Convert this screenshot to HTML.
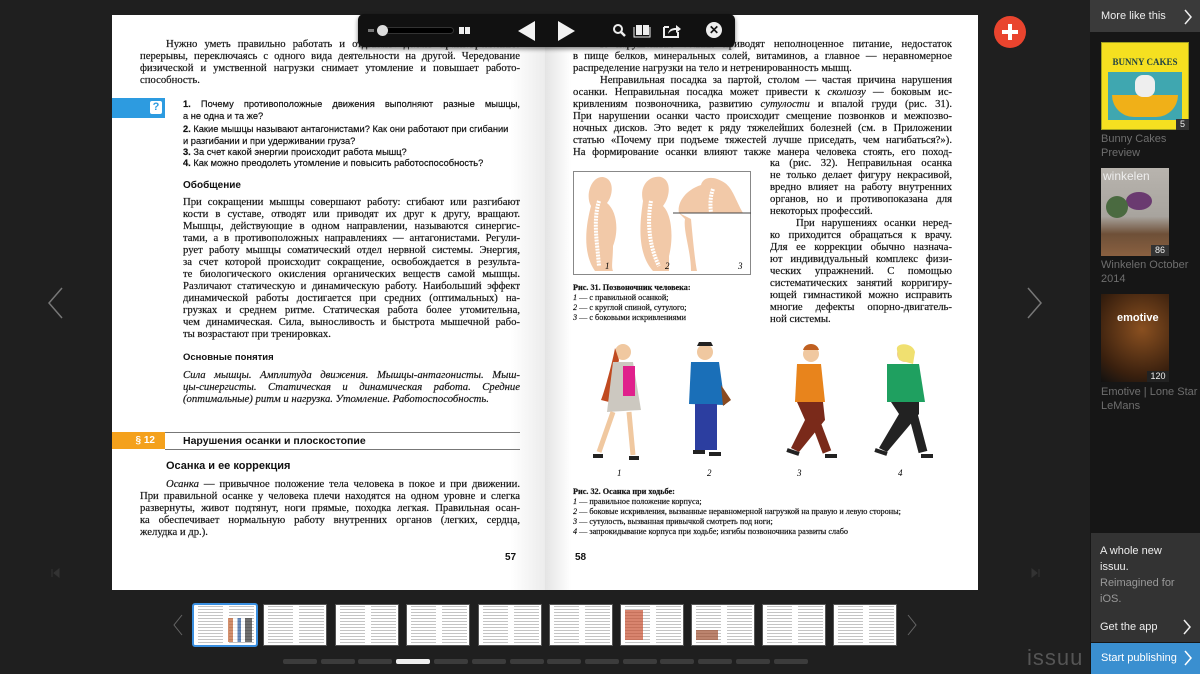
<!DOCTYPE html>
<html><head><meta charset="utf-8">
<style>
*{margin:0;padding:0;box-sizing:border-box}
body{width:1200px;height:674px;background:#1f1f1f;position:relative;overflow:hidden;font-family:"Liberation Sans",sans-serif}
.pg{position:absolute;top:15px;height:575px;background:#fff}
.l{position:absolute;font:10.7px/12px "Liberation Serif",serif;color:#151515;white-space:nowrap;text-align:justify;text-align-last:justify;height:12px;overflow:hidden;-webkit-text-stroke:0.2px #151515}
.s{font-family:"Liberation Sans",sans-serif;font-size:9.3px;color:#111;text-align-last:auto}
.h{position:absolute;font:bold 10px "Liberation Sans",sans-serif;color:#111}
.i{font-style:italic}
.sm{font-size:8.2px;text-align-last:auto}
.side{position:absolute;left:1090px;top:0;width:110px;height:674px;background:#161616}
.cap{position:absolute;left:1101px;font-size:11px;line-height:14px;color:#6e6e6e}
.th{position:absolute;top:604px;width:64px;height:42px;border:1px solid #555;background:
linear-gradient(90deg,#fff 0,#fff 4px,transparent 4px,transparent 29px,#fff 29px,#fff 35px,transparent 35px,transparent 60px,#fff 60px),
repeating-linear-gradient(#fff 0,#fff 1px,#c4c4c4 1px,#c4c4c4 2px,#fff 2px,#fff 3px);background-color:#fff}
.dot{position:absolute;top:659px;width:34px;height:5px;border-radius:2px;background:#3c3c3c}
</style></head><body>

<div class="pg" style="left:112px;width:433px;background:linear-gradient(90deg,#fff 0,#fff 92%,#ececec 100%)"></div>
<div class="pg" style="left:545px;width:433px;background:linear-gradient(90deg,#e4e4e4 0,#fff 6%,#fff 100%)"></div>

<!-- left page -->
<div class="l" style="left:166px;top:38px;width:354px">Нужно уметь правильно работать и отдыхать: делать кратковременные</div>
<div class="l" style="left:140px;top:50px;width:380px">перерывы, переключаясь с одного вида деятельности на другой. Чередование</div>
<div class="l" style="left:140px;top:62px;width:380px">физической и умственной нагрузки снимает утомление и повышает работо-</div>
<div class="l" style="left:140px;top:74px;text-align-last:auto">способность.</div>

<div style="position:absolute;left:112px;top:98px;width:53px;height:20px;background:#2d9be0"></div>
<div style="position:absolute;left:150px;top:101px;width:12px;height:13px;background:#fff;border-radius:2px;font:bold 11px/13px 'Liberation Sans';color:#2d9be0;text-align:center">?</div>
<div class="l s" style="left:183px;top:98px;width:337px;text-align-last:justify"><b>1.</b> Почему противоположные движения выполняют разные мышцы,</div>
<div class="l s" style="left:183px;top:110px">а не одна и та же?</div>
<div class="l s" style="left:183px;top:123px"><b>2.</b> Какие мышцы называют антагонистами? Как они работают при сгибании</div>
<div class="l s" style="left:183px;top:135px">и разгибании и при удерживании груза?</div>
<div class="l s" style="left:183px;top:146px"><b>3.</b> За счет какой энергии происходит работа мышц?</div>
<div class="l s" style="left:183px;top:157px"><b>4.</b> Как можно преодолеть утомление и повысить работоспособность?</div>

<div class="h" style="left:183px;top:180px">Обобщение</div>
<div class="l" style="left:183px;top:196px;width:337px">При сокращении мышцы совершают работу: сгибают или разгибают</div>
<div class="l" style="left:183px;top:208px;width:337px">кости в суставе, отводят или приводят их друг к другу, вращают.</div>
<div class="l" style="left:183px;top:220px;width:337px">Мышцы, действующие в одном направлении, называются синергис-</div>
<div class="l" style="left:183px;top:232px;width:337px">тами, а в противоположных направлениях — антагонистами. Регули-</div>
<div class="l" style="left:183px;top:244px;width:337px">рует работу мышцы соматический отдел нервной системы. Энергия,</div>
<div class="l" style="left:183px;top:256px;width:337px">за счет которой происходит сокращение, освобождается в результа-</div>
<div class="l" style="left:183px;top:268px;width:337px">те биологического окисления органических веществ самой мышцы.</div>
<div class="l" style="left:183px;top:280px;width:337px">Различают статическую и динамическую работу. Наибольший эффект</div>
<div class="l" style="left:183px;top:292px;width:337px">динамической работы достигается при средних (оптимальных) на-</div>
<div class="l" style="left:183px;top:304px;width:337px">грузках и среднем ритме. Статическая работа более утомительна,</div>
<div class="l" style="left:183px;top:316px;width:337px">чем динамическая. Сила, выносливость и быстрота мышечной рабо-</div>
<div class="l" style="left:183px;top:328px;text-align-last:auto">ты возрастают при тренировках.</div>

<div class="h" style="left:183px;top:352px;font-size:9.5px">Основные понятия</div>
<div class="l i" style="left:183px;top:369px;width:337px">Сила мышцы. Амплитуда движения. Мышцы-антагонисты. Мыш-</div>
<div class="l i" style="left:183px;top:381px;width:337px">цы-синергисты. Статическая и динамическая работа. Средние</div>
<div class="l i" style="left:183px;top:393px;text-align-last:auto">(оптимальные) ритм и нагрузка. Утомление. Работоспособность.</div>

<div style="position:absolute;left:165px;top:432px;width:355px;height:1px;background:#777"></div>
<div style="position:absolute;left:112px;top:432px;width:53px;height:17px;background:#f4a11c;color:#fff;font:bold 10px/17px 'Liberation Sans';text-align:right;padding-right:10px">§ 12</div>
<div class="h" style="left:183px;top:435px;font-size:10.5px">Нарушения осанки и плоскостопие</div>
<div style="position:absolute;left:165px;top:449px;width:355px;height:1px;background:#777"></div>
<div class="h" style="left:166px;top:460px;font-size:11px">Осанка и ее коррекция</div>
<div class="l" style="left:166px;top:478px;width:354px"><i>Осанка</i> — привычное положение тела человека в покое и при движении.</div>
<div class="l" style="left:140px;top:490px;width:380px">При правильной осанке у человека плечи находятся на одном уровне и слегка</div>
<div class="l" style="left:140px;top:502px;width:380px">развернуты, живот подтянут, ноги прямые, походка легкая. Правильная осан-</div>
<div class="l" style="left:140px;top:514px;width:380px">ка обеспечивает нормальную работу внутренних органов (легких, сердца,</div>
<div class="l" style="left:140px;top:526px;text-align-last:auto">желудка и др.).</div>
<div class="h" style="left:505px;top:552px">57</div>

<!-- right page -->
<div class="l" style="left:600px;top:38px;width:352px">К нарушениям осанки приводят неполноценное питание, недостаток</div>
<div class="l" style="left:573px;top:50px;width:379px">в пище белков, минеральных солей, витаминов, а главное — неравномерное</div>
<div class="l" style="left:573px;top:62px;text-align-last:auto">распределение нагрузки на тело и нетренированность мышц.</div>
<div class="l" style="left:600px;top:74px;width:352px">Неправильная посадка за партой, столом — частая причина нарушения</div>
<div class="l" style="left:573px;top:86px;width:379px">осанки. Неправильная посадка может привести к <i>сколиозу</i> — боковым ис-</div>
<div class="l" style="left:573px;top:98px;width:379px">кривлениям позвоночника, развитию <i>сутулости</i> и впалой груди (рис. 31).</div>
<div class="l" style="left:573px;top:110px;width:379px">При нарушении осанки часто происходит смещение позвонков и межпозво-</div>
<div class="l" style="left:573px;top:122px;width:379px">ночных дисков. Это ведет к ряду тяжелейших болезней (см. в Приложении</div>
<div class="l" style="left:573px;top:134px;width:379px">статью «Почему при подъеме тяжестей лучше приседать, чем нагибаться?»).</div>
<div class="l" style="left:573px;top:146px;width:379px">На формирование осанки влияют также манера человека стоять, его поход-</div>
<div class="l" style="left:770px;top:157px;width:182px">ка (рис. 32). Неправильная осанка</div>
<div class="l" style="left:770px;top:169px;width:182px">не только делает фигуру некрасивой,</div>
<div class="l" style="left:770px;top:181px;width:182px">вредно влияет на работу внутренних</div>
<div class="l" style="left:770px;top:193px;width:182px">органов, но и противопоказана для</div>
<div class="l" style="left:770px;top:205px;text-align-last:auto">некоторых профессий.</div>
<div class="l" style="left:796px;top:217px;width:156px">При нарушениях осанки неред-</div>
<div class="l" style="left:770px;top:229px;width:182px">ко приходится обращаться к врачу.</div>
<div class="l" style="left:770px;top:241px;width:182px">Для ее коррекции обычно назнача-</div>
<div class="l" style="left:770px;top:253px;width:182px">ют индивидуальный комплекс физи-</div>
<div class="l" style="left:770px;top:265px;width:182px">ческих упражнений. С помощью</div>
<div class="l" style="left:770px;top:277px;width:182px">систематических занятий корригиру-</div>
<div class="l" style="left:770px;top:289px;width:182px">ющей гимнастикой можно исправить</div>
<div class="l" style="left:770px;top:301px;width:182px">многие дефекты опорно-двигатель-</div>
<div class="l" style="left:770px;top:313px;text-align-last:auto">ной системы.</div>

<svg style="position:absolute;left:573px;top:171px" width="178" height="104">
<rect x="0.5" y="0.5" width="177" height="103" fill="#fff" stroke="#888"/>
<path d="M22 100 C8 80 14 50 18 35 C12 25 18 5 30 6 C42 8 40 25 34 32 C44 40 46 60 40 75 C40 88 38 96 40 100Z" fill="#f2c9a8"/>
<path d="M80 100 C62 80 68 45 70 30 C66 15 76 4 88 6 C100 10 96 28 90 35 C100 45 100 70 96 85 L96 100Z" fill="#f2c9a8"/>
<path d="M118 100 C118 80 110 60 112 48 L106 42 L170 42 C162 28 160 18 152 12 C140 4 130 6 128 14 C110 20 104 34 106 42 L118 48 C120 70 122 90 124 100Z" fill="#f2c9a8"/>
<path d="M26 30 C20 50 24 70 26 95 M78 30 C74 50 76 75 86 95 M140 18 C132 40 146 60 140 90" stroke="#fff" stroke-width="4" fill="none" stroke-dasharray="2 1"/>
<line x1="100" y1="42" x2="178" y2="42" stroke="#444"/>
<text x="32" y="98" font-size="9" font-style="italic" font-family="Liberation Serif">1</text>
<text x="92" y="98" font-size="9" font-style="italic" font-family="Liberation Serif">2</text>
<text x="165" y="98" font-size="9" font-style="italic" font-family="Liberation Serif">3</text>
</svg>
<div class="l sm" style="left:573px;top:282px;font-weight:bold">Рис. 31. Позвоночник человека:</div>
<div class="l sm" style="left:573px;top:292px"><i>1</i> — с правильной осанкой;</div>
<div class="l sm" style="left:573px;top:302px"><i>2</i> — с круглой спиной, сутулого;</div>
<div class="l sm" style="left:573px;top:312px"><i>3</i> — с боковыми искривлениями</div>

<svg style="position:absolute;left:585px;top:340px" width="350" height="140">
<g><circle cx="38" cy="12" r="8" fill="#f0c8a0"/><path d="M30 8 C28 20 20 50 16 60 L24 62 L34 20Z" fill="#c04a20"/><path d="M28 22 L48 22 L56 70 L22 72Z" fill="#ccc8c0"/><rect x="38" y="26" width="12" height="30" fill="#e0208c"/><path d="M28 72 L14 112 M44 72 L48 115" stroke="#f0c8a0" stroke-width="5"/><path d="M8 116 L18 116 M44 118 L54 118" stroke="#222" stroke-width="4"/></g>
<g transform="translate(100,0)"><circle cx="20" cy="12" r="8" fill="#f0c8a0"/><path d="M12 6 L28 6 L26 2 L14 2Z" fill="#222"/><path d="M6 22 L34 22 L40 65 L4 64Z" fill="#1a6fb8"/><rect x="10" y="64" width="22" height="46" fill="#2c3ea0"/><path d="M36 45 L46 60 L38 66Z" fill="#8a4a20"/><path d="M8 112 L20 112 M24 114 L36 114" stroke="#222" stroke-width="4"/></g>
<g transform="translate(200,0)"><circle cx="26" cy="14" r="8" fill="#f0c8a0"/><path d="M18 10 C20 2 32 2 34 10Z" fill="#c06020"/><path d="M12 24 L36 24 L40 62 L10 62Z" fill="#e8841c"/><path d="M12 62 L38 62 L40 80 L14 112 L6 108 L20 80Z" fill="#7a2a1a"/><path d="M30 80 L42 112" stroke="#7a2a1a" stroke-width="9"/><path d="M2 110 L14 114 M40 116 L52 116" stroke="#222" stroke-width="4"/></g>
<g transform="translate(290,0)"><circle cx="30" cy="14" r="8" fill="#f0c8a0"/><path d="M22 10 C20 2 38 2 40 12 L38 24 L24 20Z" fill="#f0e070"/><path d="M12 24 L44 24 L50 62 L12 62Z" fill="#1fa060"/><path d="M16 62 L44 62 L44 74 L12 112 L4 108 L24 74Z" fill="#222"/><path d="M38 74 L48 112" stroke="#222" stroke-width="9"/><path d="M0 110 L12 114 M46 116 L58 116" stroke="#222" stroke-width="4"/></g>
<g font-size="9" font-style="italic" font-family="Liberation Serif"><text x="32" y="136">1</text><text x="122" y="136">2</text><text x="212" y="136">3</text><text x="313" y="136">4</text></g>
</svg>
<div class="l sm" style="left:573px;top:486px;font-weight:bold">Рис. 32. Осанка при ходьбе:</div>
<div class="l sm" style="left:573px;top:496px"><i>1</i> — правильное положение корпуса;</div>
<div class="l sm" style="left:573px;top:506px"><i>2</i> — боковые искривления, вызванные неравномерной нагрузкой на правую и левую стороны;</div>
<div class="l sm" style="left:573px;top:516px"><i>3</i> — сутулость, вызванная привычкой смотреть под ноги;</div>
<div class="l sm" style="left:573px;top:526px"><i>4</i> — запрокидывание корпуса при ходьбе; изгибы позвоночника развиты слабо</div>
<div class="h" style="left:575px;top:552px">58</div>

<!-- toolbar -->
<div style="position:absolute;left:358px;top:14px;width:377px;height:33px;background:#111;border-radius:6px;box-shadow:0 2px 4px rgba(0,0,0,.5)"></div>
<div style="position:absolute;left:368px;top:29px;width:6px;height:3px;background:#777"></div>
<div style="position:absolute;left:378px;top:27px;width:76px;height:7px;background:#000;border-radius:4px;border:1px solid #333"></div>
<div style="position:absolute;left:377px;top:25px;width:11px;height:11px;background:#ddd;border-radius:50%"></div>
<div style="position:absolute;left:459px;top:27px;width:5px;height:7px;background:#eee"></div>
<div style="position:absolute;left:465px;top:27px;width:5px;height:7px;background:#eee"></div>
<svg style="position:absolute;left:518px;top:21px" width="60" height="20"><path d="M0 10 L17 0 L17 20Z M40 0 L57 10 L40 20Z" fill="#f2f2f2"/></svg>
<svg style="position:absolute;left:612px;top:23px" width="80" height="16">
<circle cx="6" cy="6" r="4" stroke="#eee" stroke-width="2" fill="none"/><path d="M9 9 L13 13" stroke="#eee" stroke-width="2.5"/>
<path d="M24 2 h6 v10 h-6z M31 2 h6 v10 h-6z" fill="#eee"/><path d="M22 4 v10 h16 v-10" stroke="#eee" fill="none"/>
<path d="M52 4 h5 M52 4 v10 h14 v-5" stroke="#eee" stroke-width="2" fill="none"/><path d="M56 11 C57 6 60 5 64 5 L64 2 L69 6 L64 10 L64 7 C61 7 58 8 56 11Z" fill="#eee"/>
</svg>
<div style="position:absolute;left:706px;top:22px;width:16px;height:16px;border-radius:50%;background:#eee;color:#111;font:bold 12px/16px 'Liberation Sans';text-align:center">✕</div>

<svg style="position:absolute;left:46px;top:287px" width="20" height="32"><path d="M16 1 L3 16 L16 31" stroke="#777" stroke-width="1.5" fill="none"/></svg>
<svg style="position:absolute;left:1025px;top:287px" width="20" height="32"><path d="M3 1 L16 16 L3 31" stroke="#777" stroke-width="1.5" fill="none"/></svg>
<svg style="position:absolute;left:51px;top:568px" width="10" height="10"><path d="M1 1v8M3 5L8 1v8Z" stroke="#333" fill="#333"/></svg>
<svg style="position:absolute;left:1030px;top:568px" width="10" height="10"><path d="M9 1v8M7 5L2 1v8Z" stroke="#333" fill="#333"/></svg>
<div style="position:absolute;left:994px;top:16px;width:32px;height:32px;border-radius:50%;background:#e9442e"></div>
<div style="position:absolute;left:1002px;top:30px;width:16px;height:4px;background:#fff"></div>
<div style="position:absolute;left:1008px;top:24px;width:4px;height:16px;background:#fff"></div>

<!-- thumbnails -->
<svg style="position:absolute;left:172px;top:614px" width="12" height="22"><path d="M10 1 L2 11 L10 21" stroke="#666" fill="none"/></svg>
<svg style="position:absolute;left:906px;top:614px" width="12" height="22"><path d="M2 1 L10 11 L2 21" stroke="#666" fill="none"/></svg>
<div class="th" style="left:192px;top:603px;width:66px;height:44px;border:2px solid #3a8fe0;border-radius:3px"></div>
<div class="th" style="left:263px"></div><div class="th" style="left:335px"></div><div class="th" style="left:406px"></div><div class="th" style="left:478px"></div><div class="th" style="left:549px"></div><div class="th" style="left:620px"></div><div class="th" style="left:691px"></div><div class="th" style="left:762px"></div><div class="th" style="left:833px"></div>
<div style="position:absolute;left:228px;top:618px;width:24px;height:24px;background:linear-gradient(90deg,#c06030 20%,#fff 20%,#fff 40%,#2a5aa0 40%,#2a5aa0 55%,#fff 55%,#fff 70%,#333 70%);opacity:.7"></div>
<div style="position:absolute;left:625px;top:610px;width:18px;height:30px;background:#c85030;opacity:.7"></div>
<div style="position:absolute;left:696px;top:630px;width:22px;height:10px;background:#a05030;opacity:.7"></div>

<div class="dot" style="left:283px"></div><div class="dot" style="left:321px"></div><div class="dot" style="left:358px"></div><div class="dot" style="left:396px;background:#eee"></div><div class="dot" style="left:434px"></div><div class="dot" style="left:472px"></div><div class="dot" style="left:510px"></div><div class="dot" style="left:547px"></div><div class="dot" style="left:585px"></div><div class="dot" style="left:623px"></div><div class="dot" style="left:660px"></div><div class="dot" style="left:698px"></div><div class="dot" style="left:736px"></div><div class="dot" style="left:774px"></div>
<div style="position:absolute;left:1027px;top:645px;font-size:22px;color:#555;letter-spacing:1px">issuu</div>

<!-- sidebar -->
<div class="side"></div>
<div style="position:absolute;left:1090px;top:0;width:110px;height:32px;background:#3a3a3a"></div>
<div style="position:absolute;left:1101px;top:10px;font-size:11px;color:#eee">More like this</div>
<svg style="position:absolute;left:1183px;top:9px" width="10" height="16"><path d="M2 1 L8 8 L2 15" stroke="#eee" stroke-width="1.5" fill="none"/></svg>
<div style="position:absolute;left:1101px;top:42px;width:88px;height:88px;background:#f5e020;border:1px solid #a0a020"></div>
<div style="position:absolute;left:1108px;top:57px;width:74px;height:14px;font:bold 9px 'Liberation Serif';color:#244;text-align:center">BUNNY CAKES</div>
<div style="position:absolute;left:1108px;top:72px;width:74px;height:48px;background:#3fa7b0"></div>
<div style="position:absolute;left:1112px;top:95px;width:66px;height:22px;background:#f0b018;border-radius:0 0 30px 30px"></div>
<div style="position:absolute;left:1135px;top:75px;width:20px;height:22px;background:#eee;border-radius:8px"></div>
<div style="position:absolute;left:1176px;top:119px;width:13px;height:11px;background:#333;color:#eee;font-size:9px;text-align:center">5</div>
<div class="cap" style="top:132px">Bunny Cakes<br>Preview</div>
<div style="position:absolute;left:1101px;top:168px;width:68px;height:88px;background:linear-gradient(#b8b4ae 0,#a8a49e 55%,#6e5038 75%,#8a6040 100%)"></div>
<div style="position:absolute;left:1103px;top:169px;font-size:12px;color:#eee">winkelen</div>
<div style="position:absolute;left:1126px;top:192px;width:26px;height:18px;background:#6a3a70;border-radius:50%"></div>
<div style="position:absolute;left:1106px;top:196px;width:22px;height:22px;background:#4a6a40;border-radius:50%"></div>
<div style="position:absolute;left:1151px;top:245px;width:18px;height:11px;background:#333;color:#eee;font-size:9px;text-align:center">86</div>
<div class="cap" style="top:258px">Winkelen October<br>2014</div>
<div style="position:absolute;left:1101px;top:294px;width:68px;height:88px;background:radial-gradient(circle at 60% 40%,#8a5020,#3a200e 70%,#111)"></div>
<div style="position:absolute;left:1117px;top:312px;font-size:11px;color:#fff;font-weight:bold">emotive</div>
<div style="position:absolute;left:1147px;top:371px;width:22px;height:11px;background:#222;color:#eee;font-size:9px;text-align:center">120</div>
<div class="cap" style="top:385px">Emotive | Lone Star<br>LeMans</div>

<div style="position:absolute;left:1091px;top:533px;width:109px;height:109px;background:#333"></div>
<div style="position:absolute;left:1100px;top:543px;font-size:11px;line-height:16px;color:#eee">A whole new<br>issuu.<br><span style="color:#999">Reimagined for<br>iOS.</span></div>
<div style="position:absolute;left:1100px;top:621px;font-size:11px;color:#eee">Get the app</div>
<svg style="position:absolute;left:1182px;top:619px" width="10" height="16"><path d="M2 1 L8 8 L2 15" stroke="#eee" stroke-width="1.5" fill="none"/></svg>
<div style="position:absolute;left:1091px;top:643px;width:109px;height:31px;background:#3a8fd0"></div>
<div style="position:absolute;left:1101px;top:652px;font-size:11px;color:#fff">Start publishing</div>
<svg style="position:absolute;left:1183px;top:650px" width="10" height="16"><path d="M2 1 L8 8 L2 15" stroke="#fff" stroke-width="1.5" fill="none"/></svg>
</body></html>
